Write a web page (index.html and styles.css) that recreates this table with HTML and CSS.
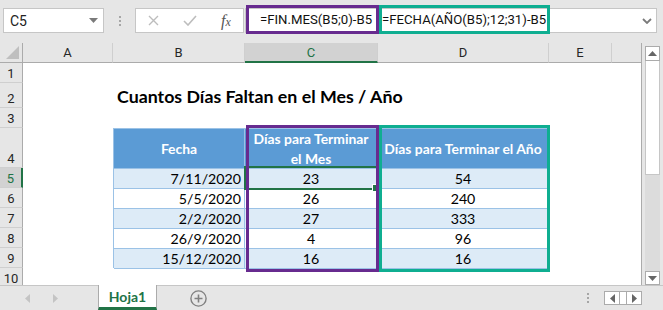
FILE: index.html
```html
<!DOCTYPE html>
<html lang="es">
<head>
<meta charset="utf-8">
<title>Cuantos Días Faltan en el Mes / Año</title>
<link rel="stylesheet" href="styles.css">
</head>
<body>
<div class="app">
  <div class="toolbar">
    <div class="namebox">
      <span>C5</span>
      <svg class="caret" width="9" height="5" viewBox="0 0 9 5"><path d="M0 0H9L4.5 5Z" fill="#7a7a7a"/></svg>
    </div>
    <div class="grip"><i></i><i></i><i></i></div>
    <div class="fxbox">
      <span class="fx-slot fx-x"><svg width="11" height="11" viewBox="0 0 11 11"><path d="M1 1L10 10M10 1L1 10" stroke="#bdbdbd" stroke-width="1.4" fill="none"/></svg></span>
      <span class="fx-slot fx-ok"><svg width="14" height="11" viewBox="0 0 14 11"><path d="M1 6L5 10L13 1" stroke="#bdbdbd" stroke-width="1.6" fill="none"/></svg></span>
      <span class="fx-slot fx-fn">f<span class="fx-sub">x</span></span>
    </div>
    <div class="formula">
      <span class="ref ref-month">=FIN.MES(B5;0)-B5</span>
      <span class="ref ref-year">=FECHA(AÑO(B5);12;31)-B5</span>
      <svg class="chev" width="10" height="6" viewBox="0 0 10 6"><path d="M1 1L5 5L9 1" stroke="#7a7a7a" stroke-width="1.8" fill="none"/></svg>
    </div>
  </div>

  <div class="sheet">
    <div class="grid-wrap">
      <div class="colheads">
        <div class="ch corner"><svg width="13" height="13" viewBox="0 0 13 13"><path d="M13 0V13H0Z" fill="#bfbfbf"/></svg></div>
        <div class="ch w-a">A</div>
        <div class="ch w-b">B</div>
        <div class="ch w-c active">C</div>
        <div class="ch w-d">D</div>
        <div class="ch w-e">E</div>
        <div class="ch w-f"></div>
      </div>
      <div class="body">
        <div class="rowheads">
          <div class="rh h20">1</div>
          <div class="rh h25">2</div>
          <div class="rh h20">3</div>
          <div class="rh h40">4</div>
          <div class="rh h20 active">5</div>
          <div class="rh h20">6</div>
          <div class="rh h20">7</div>
          <div class="rh h20">8</div>
          <div class="rh h20">9</div>
          <div class="rh h20">10</div>
        </div>
        <div class="cells">
          <div class="title">Cuantos Días Faltan en el Mes / Año</div>
          <div class="table">
            <div class="th">Fecha</div>
            <div class="th th-wrap">Días para Terminar el Mes</div>
            <div class="th">Días para Terminar el Año</div>

            <div class="td alt date">7/11/2020</div>
            <div class="td alt">23</div>
            <div class="td alt">54</div>

            <div class="td date">5/5/2020</div>
            <div class="td">26</div>
            <div class="td">240</div>

            <div class="td alt date">2/2/2020</div>
            <div class="td alt">27</div>
            <div class="td alt">333</div>

            <div class="td date">26/9/2020</div>
            <div class="td">4</div>
            <div class="td">96</div>

            <div class="td alt date">15/12/2020</div>
            <div class="td alt">16</div>
            <div class="td alt">16</div>
          </div>
          <div class="selection"></div>
          <div class="box box-month"></div>
          <div class="box box-year"></div>
        </div>
      </div>
    </div>
    <div class="vscroll">
      <div class="sb-btn sb-up"><svg width="9" height="5" viewBox="0 0 9 5"><path d="M0 5H9L4.5 0Z" fill="#666"/></svg></div>
      <div class="sb-thumb"></div>
      <div class="sb-track"></div>
      <div class="sb-btn sb-down"><svg width="9" height="5" viewBox="0 0 9 5"><path d="M0 0H9L4.5 5Z" fill="#666"/></svg></div>
    </div>
  </div>

  <div class="tabbar">
    <div class="tabnav">
      <svg width="5" height="9" viewBox="0 0 5 9"><path d="M5 0V9L0 4.5Z" fill="#c4c4c4"/></svg>
      <svg width="5" height="9" viewBox="0 0 5 9"><path d="M0 0V9L5 4.5Z" fill="#c4c4c4"/></svg>
    </div>
    <div class="tab">Hoja1</div>
    <svg class="addsheet" width="17" height="17" viewBox="0 0 17 17"><circle cx="8.5" cy="8.5" r="7.6" stroke="#808080" stroke-width="1.4" fill="none"/><path d="M8.5 4.5V12.5M4.5 8.5H12.5" stroke="#808080" stroke-width="1.6"/></svg>
    <div class="spacer"></div>
    <div class="grip grip-small"><i></i><i></i><i></i></div>
    <div class="hscroll">
      <span class="hs-btn"><svg width="5" height="9" viewBox="0 0 5 9"><path d="M5 0V9L0 4.5Z" fill="#666"/></svg></span>
      <span class="hs-mid"></span>
      <span class="hs-btn"><svg width="5" height="9" viewBox="0 0 5 9"><path d="M0 0V9L5 4.5Z" fill="#666"/></svg></span>
    </div>
  </div>
</div>
</body>
</html>
```

FILE: styles.css
```css
* { box-sizing: border-box; }

body {
  margin: 0;
  background: #e6e6e6;
  font-family: Roboto, "Noto Sans", sans-serif;
  color: #262626;
}

.app {
  width: 663px;
  height: 310px;
  display: flex;
  flex-direction: column;
  overflow: hidden;
}

/* ---------- toolbar / formula bar ---------- */
.toolbar {
  height: 43px;
  flex: none;
  display: flex;
  align-items: flex-start;
  padding-top: 8px;
}

.namebox {
  margin-left: 3px;
  width: 101px;
  height: 25px;
  background: #fff;
  border: 1px solid #c6c6c6;
  display: flex;
  align-items: center;
  justify-content: space-between;
  padding: 0 5px 0 6px;
  font-size: 14px;
  color: #222;
}

.grip {
  width: 31px;
  height: 25px;
  display: flex;
  flex-direction: column;
  align-items: center;
  justify-content: center;
  gap: 2px;
}
.grip i {
  display: block;
  width: 2px;
  height: 2px;
  background: #a6a6a6;
}

.fxbox {
  width: 109px;
  height: 25px;
  background: #fff;
  border: 1px solid #c6c6c6;
  display: flex;
  align-items: center;
}
.fx-slot {
  display: flex;
  align-items: center;
  justify-content: center;
}
.fx-x { width: 35px; }
.fx-ok { width: 38px; }
.fx-fn {
  width: 34px;
  font-family: "Liberation Serif", serif;
  font-style: italic;
  font-size: 16px;
  color: #555;
}
.fx-sub {
  font-size: 12px;
  margin-top: 3px;
}

.formula {
  margin-left: 1px;
  width: 412px;
  height: 25px;
  background: #fff;
  border: 1px solid #c6c6c6;
  display: flex;
  align-items: stretch;
}
.ref {
  margin: -4px 0 -2px 0;
  border: 3px solid;
  display: flex;
  align-items: center;
  font-size: 13.2px;
  color: #111;
  white-space: nowrap;
}
.ref-month {
  width: 133px;
  border-color: #672b8f;
  padding-left: 11px;
}
.ref-year {
  width: 171px;
  border-color: #0fae91;
  padding-left: 0;
}
.chev {
  margin: 0 4px 0 auto;
  align-self: center;
}

/* ---------- sheet ---------- */
.sheet {
  height: 242px;
  flex: none;
  display: flex;
}

.grid-wrap {
  width: 642px;
  border-right: 1px solid #ababab;
  display: flex;
  flex-direction: column;
  overflow: hidden;
}

.colheads {
  height: 20px;
  flex: none;
  display: flex;
  background: #e6e6e6;
}
.ch {
  height: 20px;
  border-right: 1px solid #cfcfcf;
  border-bottom: 1px solid #ababab;
  display: flex;
  align-items: center;
  justify-content: center;
  font-size: 13px;
  color: #262626;
}
.ch.corner {
  width: 23px;
  border-right-color: #ababab;
  align-items: flex-end;
  justify-content: flex-end;
  padding: 0 3px 3px 0;
}
.w-a { width: 90px; }
.w-b { width: 132px; }
.w-c { width: 133px; }
.w-d { width: 171px; }
.w-e { width: 63px; }
.w-f { width: 29px; border-right: 0; }
.ch.active {
  background: #d2d2d2;
  border-bottom: 2px solid #217346;
  color: #217346;
}

.body {
  flex: 1;
  display: flex;
  overflow: hidden;
}

.rowheads {
  width: 23px;
  flex: none;
  display: flex;
  flex-direction: column;
  background: #e6e6e6;
}
.rh {
  flex: none;
  border-right: 1px solid #ababab;
  border-bottom: 1px solid #cfcfcf;
  display: flex;
  align-items: flex-end;
  justify-content: center;
  padding-bottom: 1px;
  font-size: 13px;
  color: #262626;
}
.h20 { height: 20px; }
.h25 { height: 25px; }
.h40 { height: 40px; }
.rh.active {
  background: #d2d2d2;
  border-right: 2px solid #217346;
  color: #217346;
}

.cells {
  width: 618px;
  flex: none;
  background: #fff;
  display: grid;
  grid-template-columns: 90px 132px 133px 171px 63px 29px;
  grid-template-rows: 20px 25px 20px 40px repeat(6, 20px);
  align-content: start;
}

.title {
  grid-column: 2 / 5;
  grid-row: 2;
  align-self: end;
  padding: 0 0 1px 4px;
  font-family: Lato, "Open Sans", sans-serif;
  font-weight: 700;
  font-size: 17.8px;
  color: #000;
  white-space: nowrap;
}

.table {
  grid-column: 2 / 5;
  grid-row: 4 / 10;
  display: grid;
  grid-template-columns: 131px 133px 171px;
  grid-template-rows: 40px repeat(5, 20px);
  border-left: 1px solid #9bc2e6;
  border-top: 1px solid #9bc2e6;
  font-family: Lato, "Open Sans", sans-serif;
  font-size: 14.2px;
}
.th, .td {
  border-right: 1px solid #9bc2e6;
  border-bottom: 1px solid #9bc2e6;
  display: flex;
  align-items: center;
  justify-content: center;
  text-align: center;
}
.th {
  background: #5b9bd5;
  color: #fff;
  font-weight: 700;
  font-size: 13.9px;
  line-height: 20px;
  padding: 0 3px;
}
.th.th-wrap { padding: 0 5px; }
.td {
  background: #fff;
  color: #000;
}
.td.alt { background: #ddebf7; }
.td.date {
  justify-content: flex-end;
  padding-right: 3px;
}

.selection {
  grid-column: 3;
  grid-row: 5;
  margin: -2px 0 -2px -1px;
  border: 2px solid #217346;
  position: relative;
}
.selection::after {
  content: "";
  position: absolute;
  right: -4px;
  bottom: -4px;
  width: 6px;
  height: 6px;
  background: #217346;
  border: 1px solid #fff;
}

.box {
  grid-row: 4 / 10;
  margin: -3px -1px -4px 1px;
  border: 3px solid;
  position: relative;
}
.box-month { grid-column: 3; border-color: #672b8f; }
.box-year { grid-column: 4; border-color: #0fae91; }

/* ---------- vertical scrollbar ---------- */
.vscroll {
  width: 15px;
  margin-left: 3px;
  display: flex;
  flex-direction: column;
  padding-top: 3px;
}
.sb-btn {
  flex: none;
  background: #fff;
  border: 1px solid #ababab;
  display: flex;
  align-items: center;
  justify-content: center;
}
.sb-up { height: 15px; }
.sb-down { height: 14px; }
.sb-thumb {
  flex: none;
  height: 114px;
  background: #fff;
  border: 1px solid #c6c6c6;
  border-top: 0;
}
.sb-track {
  flex: 1;
  background: #dcdcdc;
}

/* ---------- sheet tabs ---------- */
.tabbar {
  height: 25px;
  flex: none;
  display: flex;
  align-items: center;
  border-top: 1px solid #c6c6c6;
}
.tabnav {
  width: 98px;
  height: 100%;
  display: flex;
  align-items: center;
  gap: 23px;
  padding-left: 25px;
}
.tab {
  width: 59px;
  height: 25px;
  margin-top: -1px;
  align-self: flex-start;
  background: #fff;
  border-left: 1px solid #ababab;
  border-right: 1px solid #ababab;
  border-bottom: 3px solid #217346;
  display: flex;
  align-items: center;
  justify-content: center;
  font-family: Lato, "Open Sans", sans-serif;
  font-weight: 700;
  font-size: 14px;
  color: #217346;
}
.addsheet {
  margin-left: 33px;
}
.spacer { flex: 1; }
.grip-small {
  width: 6px;
  height: 12px;
  margin-right: 13px;
}
.hscroll {
  width: 38px;
  height: 14px;
  margin-right: 21px;
  display: flex;
  border: 1px solid #ababab;
  background: #fff;
}
.hs-btn {
  width: 14px;
  display: flex;
  align-items: center;
  justify-content: center;
}
.hs-mid {
  width: 8px;
  border-left: 1px solid #ababab;
  border-right: 1px solid #ababab;
}
```
